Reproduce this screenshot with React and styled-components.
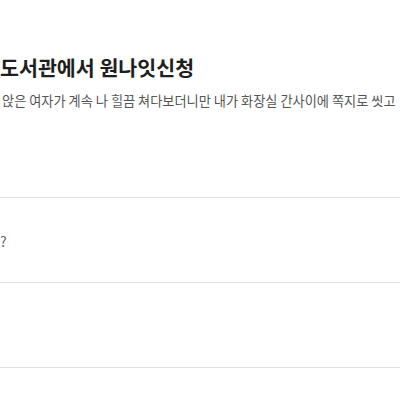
import React from 'react';
import styled, { createGlobalStyle } from 'styled-components';

const GlobalStyle = createGlobalStyle`
  html, body {
    margin: 0;
    padding: 0;
    background: #ffffff;
    overflow: hidden;
  }
  body {
    font-family: 'Noto Sans CJK KR', 'Noto Sans', sans-serif;
  }
`;

const Page = styled.div`
  width: 400px;
  height: 400px;
  overflow: hidden;
  background: #fff;
`;

const Header = styled.div`
  padding-top: 53px;
  height: 197px;
  box-sizing: border-box;
`;

const Title = styled.h1`
  margin: 0;
  font-size: 20.6px;
  font-weight: 700;
  line-height: 28px;
  color: #1e1e1e;
  white-space: nowrap;
`;

const Summary = styled.p`
  margin: 11px 0 0 2px;
  font-size: 13.2px;
  font-weight: 400;
  line-height: 18px;
  color: #555;
  white-space: nowrap;
`;

const List = styled.ul`
  list-style: none;
  margin: 0;
  padding: 0;
`;

const Row = styled.li`
  height: 85px;
  box-sizing: border-box;
  border-top: 1px solid #e2e2e2;
  display: flex;
  align-items: center;
  padding-top: 2px;
  font-size: 14px;
  color: #666;
`;

const rows = ['?', ''];

export default function App() {
  return (
    <Page>
      <GlobalStyle />
      <Header>
        <Title>도서관에서 원나잇신청</Title>
        <Summary>앉은 여자가 계속 나 힐끔 쳐다보더니만 내가 화장실 간사이에 쪽지로 씻고</Summary>
      </Header>
      <List>
        {rows.map((text, i) => (
          <Row key={i}>{text}</Row>
        ))}
        <Row />
      </List>
    </Page>
  );
}
